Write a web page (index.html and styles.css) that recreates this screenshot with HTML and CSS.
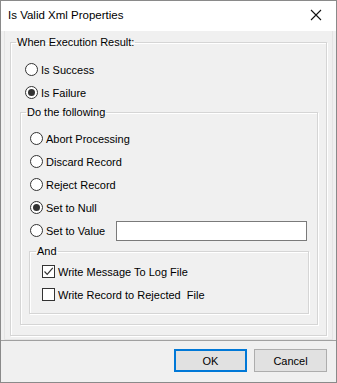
FILE: index.html
```html
<!DOCTYPE html>
<html lang="en">
<head>
  <meta charset="UTF-8" />
  <title>Is Valid Xml Properties</title>
  <link rel="stylesheet" href="styles.css">
</head>
<body>

  <div class="window">
    <div class="titlebar">
      <span class="title">Is Valid Xml Properties</span>
      <span class="close">
        <svg width="12" height="12" viewBox="0 0 12 12">
          <path d="M1 1 L11 11 M11 1 L1 11" stroke="#111" stroke-width="1.1" fill="none" />
        </svg>
      </span>
    </div>

    <div class="content">
      <div class="panel">
        <fieldset class="group group-main">
          <legend>When Execution Result:</legend>
          <label class="opt"><span class="radio"></span>Is Success</label>
          <label class="opt"><span class="radio checked"></span>Is Failure</label>

          <fieldset class="group group-do">
            <legend>Do the following</legend>
            <label class="opt"><span class="radio"></span>Abort Processing</label>
            <label class="opt"><span class="radio"></span>Discard Record</label>
            <label class="opt"><span class="radio"></span>Reject Record</label>
            <label class="opt"><span class="radio checked"></span>Set to Null</label>
            <div class="opt">
              <span class="radio"></span>Set to Value
              <input type="text" class="value-box">
            </div>

            <fieldset class="group group-and">
              <legend>And</legend>
              <label class="opt"><span class="check checked">
                <svg width="11" height="11" viewBox="0 0 11 11">
                  <path d="M1.5 5.5 L4.2 8.3 L9.8 1.8" stroke="#333" stroke-width="1.2" fill="none" />
                </svg>
              </span>Write Message To Log File</label>
              <label class="opt"><span class="check"></span>Write Record to Rejected&nbsp; File</label>
            </fieldset>
          </fieldset>
        </fieldset>
      </div>
    </div>

    <div class="footer">
      <button class="btn btn-default">OK</button>
      <button class="btn">Cancel</button>
    </div>
  </div>

</body>
</html>
```

FILE: styles.css
```css
* {
  box-sizing: border-box;
}
html, body {
  margin: 0;
  padding: 0;
}
body {
  width: 337px;
  height: 383px;
  font-family: 'Liberation Sans', Arial, sans-serif;
  font-size: 11px;
  color: #000;
  background: #f0f0f0;
}
.window {
  width: 337px;
  height: 383px;
  border: 1px solid #8a8a8a;
  display: flex;
  flex-direction: column;
  background: #f0f0f0;
}
.titlebar {
  height: 30px;
  background: #fff;
  display: flex;
  align-items: center;
  justify-content: space-between;
  padding: 0 10px 2px 7px;
}
.title {
  font-size: 11.5px;
  color: #000;
}
.close {
  display: flex;
  margin-right: 4px;
}
.content {
  padding: 0 3px 0 3px;
}
.panel {
  border: 1px solid #e4e4e4;
  border-top: none;
  padding: 5px 5px 5px 5px;
  height: 309px;
}

/* group boxes */
.group {
  margin: 0;
  border: 1px solid #d5d5d5;
  box-shadow: inset 1px 1px 0 #fff, 1px 1px 0 #fff;
  min-width: 0;
}
.group legend {
  padding: 0 1px;
  line-height: 13px;
  font-size: 11px;
}
.group-main {
  padding: 9px 5px 10px 5px;
}
.group-main > .opt {
  margin-left: 9px;
}
.group-do {
  margin: 2px 3px 0 4px;
  padding: 8px 5px 10px 5px;
}
.group-do > .opt {
  margin-left: 4px;
  height: 23px;
}
.group-and {
  margin: 3px 3px 0 3px;
  padding: 2px 6px 7px 6px;
}
.group-and > .opt {
  margin-left: 6px;
}

/* option rows */
.opt {
  display: flex;
  align-items: center;
  height: 23px;
  white-space: nowrap;
}
.radio {
  width: 13px;
  height: 13px;
  border: 1px solid #333;
  border-radius: 50%;
  background: #fff;
  margin-right: 3px;
  display: flex;
  align-items: center;
  justify-content: center;
  flex-shrink: 0;
}
.radio.checked::after {
  content: "";
  width: 7px;
  height: 7px;
  border-radius: 50%;
  background: #333;
}
.check {
  width: 13px;
  height: 13px;
  border: 1px solid #333;
  background: #fff;
  margin-right: 3px;
  display: flex;
  align-items: center;
  justify-content: center;
  flex-shrink: 0;
}
.value-box {
  margin-left: auto;
  margin-right: 5px;
  width: 191px;
  height: 20px;
  border: 1px solid #7a7a7a;
  background: #fff;
  outline: none;
}

/* buttons */
.footer {
  margin-top: auto;
  border-top: 1px solid #a0a0a0;
  height: 42px;
  display: flex;
  justify-content: flex-end;
  align-items: flex-start;
  padding: 8px 9px 0 0;
  gap: 7px;
}
.btn {
  width: 73px;
  height: 23px;
  font-family: 'Liberation Sans', Arial, sans-serif;
  font-size: 11px;
  color: #000;
  background: #e1e1e1;
  border: 1px solid #adadad;
  padding: 0;
}
.btn-default {
  border: 2px solid #0078d7;
}
```
